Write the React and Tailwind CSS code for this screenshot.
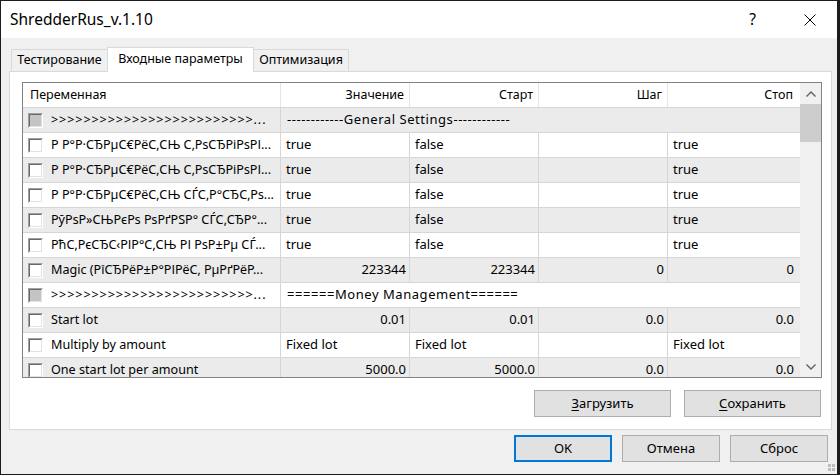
import React from "react";

const GRID = "grid grid-cols-[258px_129px_129px_129px_132px]";

function Checkbox({ group }) {
  return (
    <div className="w-[15px] h-[15px] shrink-0 border border-t-[#a0a0a0] border-l-[#a0a0a0] border-b-white border-r-white">
      <div
        className={
          group
            ? "w-full h-full border border-t-[#696969] border-l-[#696969] border-b-[#e3e3e3] border-r-[#e3e3e3] bg-[#c4c4c4]"
            : "w-full h-full border border-t-[#696969] border-l-[#696969] border-b-[#e3e3e3] border-r-[#e3e3e3] bg-white"
        }
      />
    </div>
  );
}

const GT = ">>>>>>>>>>>>>>>>>>>>>>>>>...";

const rows = [
  { name: GT, group: true, value: "------------General Settings------------" },
  { name: "Р Р°Р·СЂРµС€РёС‚СЊ С‚РѕСЂРіРѕРІ...", cells: [["true", "l"], ["false", "l"], ["", "l"], ["true", "l"]] },
  { name: "Р Р°Р·СЂРµС€РёС‚СЊ С‚РѕСЂРіРѕРІ...", cells: [["true", "l"], ["false", "l"], ["", "l"], ["true", "l"]] },
  { name: "Р Р°Р·СЂРµС€РёС‚СЊ СЃС‚Р°СЂС‚Рѕ...", cells: [["true", "l"], ["false", "l"], ["", "l"], ["true", "l"]] },
  { name: "РўРѕР»СЊРєРѕ РѕРґРЅР° СЃС‚СЂР°...", cells: [["true", "l"], ["false", "l"], ["", "l"], ["true", "l"]] },
  { name: "РћС‚РєСЂС‹РІР°С‚СЊ РІ РѕР±Рµ СЃ...", cells: [["true", "l"], ["false", "l"], ["", "l"], ["true", "l"]] },
  { name: "Magic (РїСЂРёР±Р°РІРёС‚ РµРґРёР...", cells: [["223344", "r"], ["223344", "r"], ["0", "r"], ["0", "r"]] },
  { name: GT, group: true, value: "======Money Management======" },
  { name: "Start lot", cells: [["0.01", "r"], ["0.01", "r"], ["0.0", "r"], ["0.0", "r"]] },
  { name: "Multiply by amount", cells: [["Fixed lot", "l"], ["Fixed lot", "l"], ["", "l"], ["Fixed lot", "l"]] },
  { name: "One start lot per amount", cells: [["5000.0", "r"], ["5000.0", "r"], ["0.0", "r"], ["0.0", "r"]] },
];

function Row({ r, i }) {
  const bg = i % 2 === 0 ? "bg-[#ebebeb]" : "bg-white";
  return (
    <div className={`${GRID} h-[25px] shrink-0 border-b border-[#d6d6d6] text-[13px] ${bg}`}>
      <div className="flex items-center pl-[5px] border-r border-[#d6d6d6] overflow-hidden text-[12.6px]">
        <Checkbox group={r.group} />
        <span className={r.group ? "ml-[8px] whitespace-nowrap tracking-[0.9px]" : "ml-[8px] whitespace-nowrap"}>
          {r.name}
        </span>
      </div>
      {r.group ? (
        <div className="col-span-4 flex items-center pl-[6px] whitespace-nowrap tracking-[0.55px]">{r.value}</div>
      ) : (
        r.cells.map(([t, a], k) => (
          <div
            key={k}
            className={
              (k < 3 ? "border-r border-[#d6d6d6] " : "") +
              (a === "r"
                ? k === 3
                  ? "flex items-center justify-end pr-[6px]"
                  : "flex items-center justify-end pr-[3px]"
                : "flex items-center pl-[5px]")
            }
          >
            {t}
          </div>
        ))
      )}
    </div>
  );
}

function Btn({ children, w, primary }) {
  return (
    <div
      className={
        primary
          ? `${w} h-[27px] flex items-center justify-center bg-[#e1e1e1] border-2 border-[#0078d7] text-[13px]`
          : `${w} h-[27px] flex items-center justify-center bg-[#e1e1e1] border border-[#adadad] text-[13px]`
      }
    >
      {children}
    </div>
  );
}

export default function App() {
  return (
    <div className="w-[840px] h-[475px] bg-[#1c1c1c] pt-px pl-px font-['Noto_Sans',sans-serif] text-[12.5px] text-black overflow-hidden">
      <div className="relative w-[836px] h-[473px] bg-[#f0f0f0] flex flex-col">
        {/* title bar */}
        <div className="h-[37px] bg-white flex items-center pl-[9px] shrink-0">
          <span className="text-[15.5px] leading-none">ShredderRus_v.1.10</span>
          <span className="ml-auto text-[15.5px] leading-none mr-[48px]">?</span>
          <svg width="12" height="12" viewBox="0 0 12 12" className="mr-[21px]">
            <path d="M0.5 0.5 L11.5 11.5 M11.5 0.5 L0.5 11.5" stroke="#000" strokeWidth="1" />
          </svg>
        </div>

        {/* tabs */}
        <div className="mt-[9px] h-[25px] -mb-px flex items-end pl-[10px] relative z-10 shrink-0">
          <div className="h-[22px] mb-px w-[96px] border-t border-l border-[#d9d9d9] bg-[#f0f0f0] flex items-center justify-center">
            Тестирование
          </div>
          <div className="h-[25px] w-[147px] border-t border-l border-r border-[#d9d9d9] bg-white flex items-center justify-center pb-[2px]">
            Входные параметры
          </div>
          <div className="h-[22px] mb-px w-[95px] border-t border-r border-[#d9d9d9] bg-[#f0f0f0] flex items-center justify-center">
            Оптимизация
          </div>
        </div>

        {/* panel */}
        <div className="ml-[8px] w-[823px] h-[359px] border border-[#d9d9d9] bg-white flex flex-col shrink-0">
          <div className="ml-[12px] mt-[10px] w-[800px] h-[296px] border border-[#828282] flex">
            <div className="w-[777px] h-full overflow-hidden flex flex-col">
              <div className={`${GRID} h-[25px] shrink-0 border-b border-[#d6d6d6] bg-white`}>
                <div className="flex items-center pl-[7px] border-r border-[#e5e5e5]">Переменная</div>
                <div className="flex items-center justify-end pr-[5px] border-r border-[#e5e5e5]">Значение</div>
                <div className="flex items-center justify-end pr-[5px] border-r border-[#e5e5e5]">Старт</div>
                <div className="flex items-center justify-end pr-[5px] border-r border-[#e5e5e5]">Шаг</div>
                <div className="flex items-center justify-end pr-[7px]">Стоп</div>
              </div>
              {rows.map((r, i) => (
                <Row key={i} r={r} i={i} />
              ))}
            </div>
            <div className="w-[21px] h-full bg-[#f0f0f0] flex flex-col">
              <div className="h-[21px] flex items-center justify-center">
                <svg width="10" height="6" viewBox="0 0 10 6">
                  <path d="M0.5 5.5 L5 1 L9.5 5.5" stroke="#606060" strokeWidth="1.4" fill="none" />
                </svg>
              </div>
              <div className="h-[38px] bg-[#cdcdcd]" />
              <div className="flex-1" />
              <div className="h-[21px] flex items-center justify-center">
                <svg width="10" height="6" viewBox="0 0 10 6">
                  <path d="M0.5 0.5 L5 5 L9.5 0.5" stroke="#606060" strokeWidth="1.4" fill="none" />
                </svg>
              </div>
            </div>
          </div>
          <div className="mt-[12px] flex justify-end gap-[13px] pr-[10px]">
            <Btn w="w-[137px]">
              <span>
                <span className="underline underline-offset-2">З</span>агрузить
              </span>
            </Btn>
            <Btn w="w-[137px]">
              <span>
                <span className="underline underline-offset-2">С</span>охранить
              </span>
            </Btn>
          </div>
        </div>

        {/* bottom buttons */}
        <div className="mt-[5px] flex justify-end gap-[10px] pr-[9px]">
          <Btn w="w-[98px]" primary>
            OK
          </Btn>
          <Btn w="w-[98px]">Отмена</Btn>
          <Btn w="w-[98px]">Сброс</Btn>
        </div>

        {/* resize grip */}
        <svg width="8" height="8" viewBox="0 0 8 8" className="absolute right-[1px] bottom-[2px]">
          <rect x="0" y="0" width="3" height="3" fill="#bdbdbd" />
          <rect x="4" y="0" width="3" height="3" fill="#bdbdbd" />
          <rect x="0" y="4" width="3" height="3" fill="#bdbdbd" />
          <rect x="4" y="4" width="3" height="3" fill="#bdbdbd" />
        </svg>
      </div>
    </div>
  );
}
